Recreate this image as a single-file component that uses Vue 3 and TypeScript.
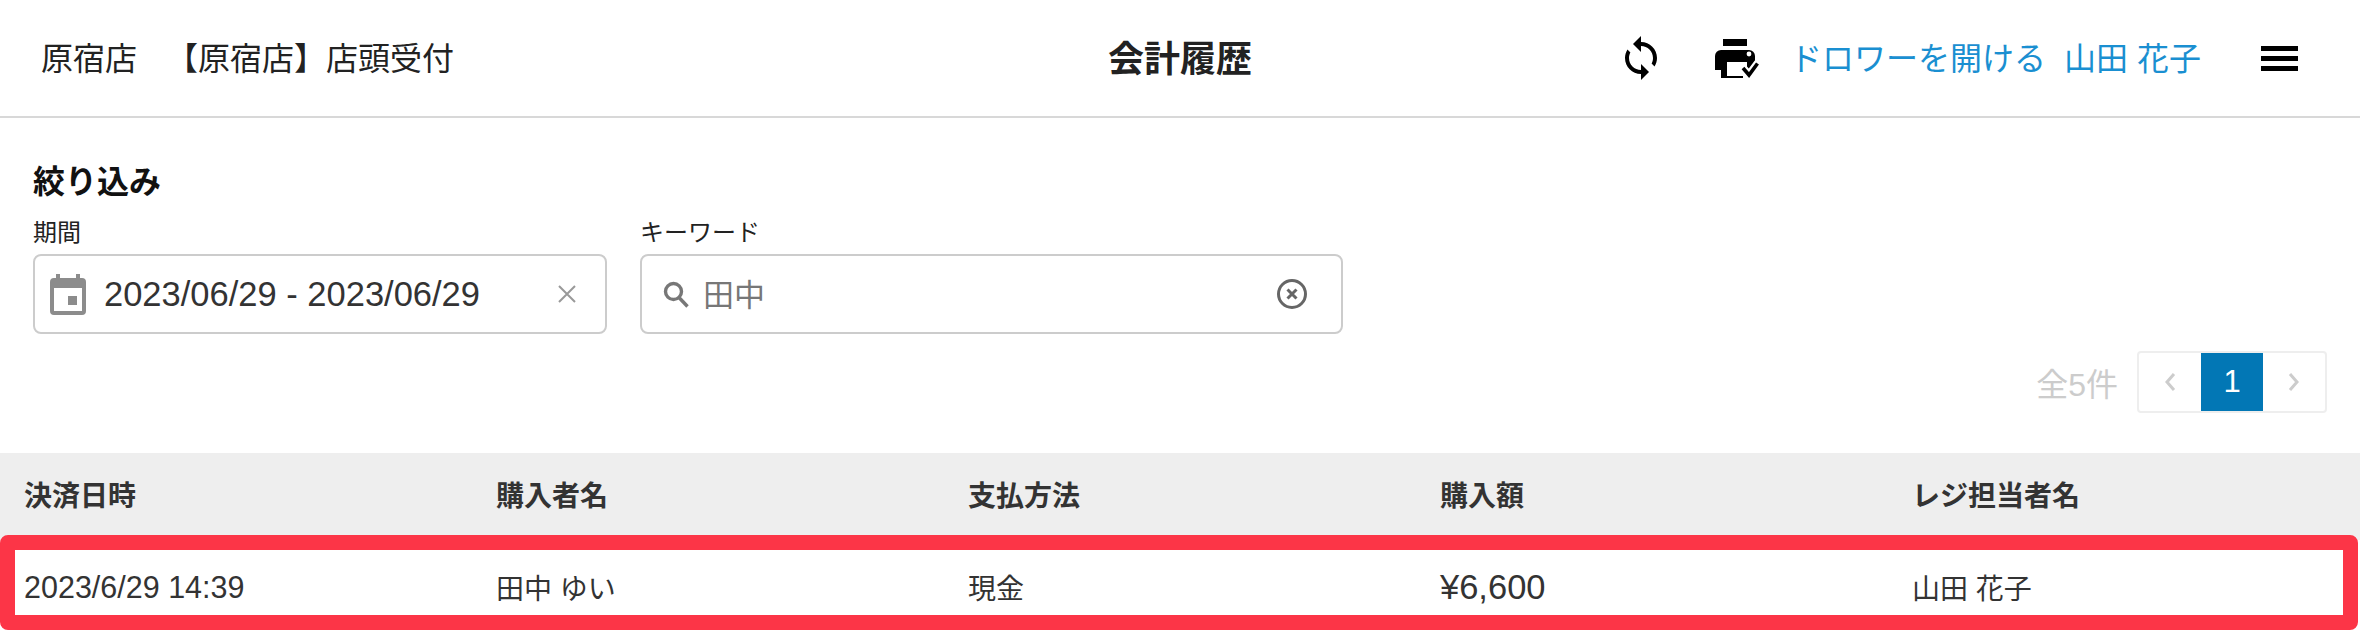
<script setup lang="ts">
interface Sale {
  date: string
  buyer: string
  method: string
  amount: string
  staff: string
}

const columns: string[] = ['決済日時', '購入者名', '支払方法', '購入額', 'レジ担当者名']

const sale: Sale = {
  date: '2023/6/29 14:39',
  buyer: '田中 ゆい',
  method: '現金',
  amount: '¥6,600',
  staff: '山田 花子'
}
</script>

<template>
  <div class="page">
    <header class="topbar">
      <div class="topbar_left">
        <span>原宿店</span>
        <span class="register">【原宿店】店頭受付</span>
      </div>
      <h1 class="title">会計履歴</h1>
      <div class="topbar_right">
        <svg class="icon_sync" viewBox="0 0 24 24" width="48" height="48">
          <path d="M12 4V1L8 5l4 4V6c3.31 0 6 2.69 6 6 0 1.01-.25 1.97-.7 2.8l1.46 1.46C19.54 15.03 20 13.57 20 12c0-4.42-3.58-8-8-8zm0 14c-3.31 0-6-2.69-6-6 0-1.01.25-1.97.7-2.8L5.24 7.74C4.46 8.97 4 10.43 4 12c0 4.42 3.58 8 8 8v3l4-4-4-4v3z" />
        </svg>
        <svg class="icon_print" viewBox="0 0 45 39" width="45" height="39">
          <path d="M8 0h24v7H8z" />
          <path d="M6 11h28a6 6 0 0 1 6 6v14h-31v6h19v2H6v-8H0V17a6 6 0 0 1 6-6z" />
          <circle cx="34" cy="15" r="2.4" fill="#fff" />
          <path d="M9 23h23v8H9z" fill="#fff" />
          <path d="M9 23h3v14H9z" />
          <path d="M27 28l7 8 9-12" fill="none" stroke="#fff" stroke-width="8" />
          <path d="M28 29l6 7 8.500-11.500" fill="none" stroke="#000" stroke-width="3.600" />
        </svg>
        <a class="drawer">ドロワーを開ける</a>
        <a class="staff">山田 花子</a>
        <div class="hamburger">
          <span></span>
          <span></span>
          <span></span>
        </div>
      </div>
    </header>

    <section class="filter">
      <h2 class="filter_title">絞り込み</h2>
      <div class="fields">
        <div class="field field_date">
          <label>期間</label>
          <div class="input">
            <svg class="icon_calendar" viewBox="0 0 36 41" width="36" height="41">
              <path d="M6 0h4v4h16V0h4v4h2a4 4 0 0 1 4 4v29a4 4 0 0 1-4 4H4a4 4 0 0 1-4-4V8a4 4 0 0 1 4-4h2z" fill="#8c8c8c" />
              <path d="M4 14h28v23H4z" fill="#fff" />
              <path d="M18 22h9v9h-9z" fill="#8c8c8c" />
            </svg>
            <span class="input_value">2023/06/29 - 2023/06/29</span>
            <svg class="icon_close" viewBox="0 0 20 20" width="20" height="20">
              <path d="M2 2l16 16M18 2L2 18" stroke="#999" stroke-width="2" fill="none" />
            </svg>
          </div>
        </div>
        <div class="field field_keyword">
          <label>キーワード</label>
          <div class="input">
            <svg class="icon_search" viewBox="0 0 26 27" width="26" height="27">
              <circle cx="10.500" cy="10.500" r="8" fill="none" stroke="#777" stroke-width="3.400" />
              <path d="M16 16.500l8.500 9" stroke="#777" stroke-width="3.400" fill="none" />
            </svg>
            <span class="input_keyword">田中</span>
            <svg class="icon_clear" viewBox="0 0 30 30" width="30" height="30">
              <circle cx="15" cy="15" r="13.500" fill="none" stroke="#666" stroke-width="3" />
              <path d="M10.500 10.500l9 9M19.500 10.500l-9 9" stroke="#666" stroke-width="3" fill="none" />
            </svg>
          </div>
        </div>
      </div>
      <div class="pager_row">
        <span class="total">全5件</span>
        <div class="pager">
          <div class="pager_btn">
            <svg viewBox="0 0 12 20" width="12" height="20">
              <path d="M10 2L3 10l7 8" fill="none" stroke="#ccc" stroke-width="3" />
            </svg>
          </div>
          <div class="pager_btn current">1</div>
          <div class="pager_btn">
            <svg viewBox="0 0 12 20" width="12" height="20">
              <path d="M2 2l7 8-7 8" fill="none" stroke="#ccc" stroke-width="3" />
            </svg>
          </div>
        </div>
      </div>
    </section>

    <section class="table">
      <div class="table_head">
        <div v-for="col in columns" :key="col" class="cell">{{ col }}</div>
      </div>
      <div class="table_row">
        <div class="cell date">{{ sale.date }}</div>
        <div class="cell">{{ sale.buyer }}</div>
        <div class="cell">{{ sale.method }}</div>
        <div class="cell amount">{{ sale.amount }}</div>
        <div class="cell">{{ sale.staff }}</div>
        <div class="highlight"></div>
      </div>
    </section>
  </div>
</template>

<style>
html,
body {
  margin: 0;
  overflow: hidden;
  background: #fff;
}
</style>

<style scoped>
.page {
  width: 2360px;
  height: 631px;
  overflow: hidden;
  color: #222;
  font-family: "Liberation Sans", "Noto Sans CJK JP", sans-serif;
}

.topbar {
  display: flex;
  align-items: center;
  height: 116px;
  box-sizing: content-box;
  border-bottom: 2px solid #d8d8d8;
  padding: 0 41px;
  font-size: 32px;
}

.topbar_left {
  flex: 1;
  display: flex;
  color: #222;
  padding-bottom: 4px;
}

.register {
  margin-left: 29px;
}

.title {
  margin: 0;
  padding-bottom: 4px;
  font-size: 36px;
  font-weight: 700;
  color: #222;
}

.topbar_right {
  flex: 1;
  display: flex;
  align-items: center;
  justify-content: flex-end;
}

.icon_sync {
  display: block;
  margin-right: 50px;
}

.icon_print {
  display: block;
  margin-right: 30px;
}

.drawer,
.staff {
  color: #1a8fd1;
  white-space: nowrap;
  padding-bottom: 4px;
}

.staff {
  margin-left: 18px;
}

.hamburger {
  display: flex;
  flex-direction: column;
  gap: 5px;
  width: 37px;
  margin: 0 21px 0 60px;
}

.hamburger span {
  display: block;
  height: 5px;
  background: #000;
}

.filter {
  padding: 46px 33px 0;
  height: 335px;
  box-sizing: border-box;
}

.filter_title {
  margin: 0;
  font-size: 32px;
  line-height: 36px;
  font-weight: 700;
  color: #111;
}

.fields {
  display: flex;
  gap: 33px;
  margin-top: 18px;
}

.field label {
  display: block;
  font-size: 24px;
  line-height: 30px;
  margin-bottom: 6px;
}

.field_date {
  width: 574px;
}

.field_keyword {
  width: 703px;
}

.input {
  display: flex;
  align-items: center;
  height: 80px;
  box-sizing: border-box;
  border: 2px solid #ccc;
  border-radius: 8px;
  background: #fff;
}

.icon_calendar {
  margin-left: 15px;
}

.input_value {
  margin-left: 18px;
  font-size: 34.5px;
  color: #333;
  white-space: nowrap;
}

.icon_close {
  margin-left: auto;
  margin-right: 28px;
}

.icon_search {
  margin-left: 21px;
}

.input_keyword {
  margin-left: 14px;
  padding-bottom: 3px;
  font-size: 31px;
  color: #777;
}

.icon_clear {
  margin-left: auto;
  margin-right: 34px;
}

.pager_row {
  display: flex;
  align-items: center;
  justify-content: flex-end;
  margin-top: 17px;
}

.total {
  font-size: 32px;
  color: #ccc;
  margin-right: 19px;
}

.pager {
  display: flex;
  width: 190px;
  height: 62px;
  box-sizing: border-box;
  border: 2px solid #eee;
  border-radius: 4px;
}

.pager_btn {
  flex: 1;
  display: flex;
  align-items: center;
  justify-content: center;
}

.current {
  background: #0277b5;
  color: #fff;
  font-size: 31px;
}

.table_head,
.table_row {
  display: grid;
  grid-template-columns: repeat(5, 1fr);
  align-items: center;
}

.table_head {
  height: 87px;
  padding-bottom: 5px;
  box-sizing: border-box;
  background: #eee;
  font-size: 28px;
  font-weight: 700;
  color: #333;
}

.table_row {
  position: relative;
  height: 91px;
  padding-top: 3px;
  box-sizing: border-box;
  font-size: 28px;
  color: #333;
}

.cell {
  padding-left: 24px;
  white-space: nowrap;
}

.date {
  font-size: 30.5px;
}

.amount {
  font-size: 34.5px;
}

.highlight {
  position: absolute;
  left: 0;
  right: 2px;
  top: -5px;
  bottom: 1px;
  border: 15px solid #fc3547;
  border-radius: 8px;
  pointer-events: none;
}
</style>
